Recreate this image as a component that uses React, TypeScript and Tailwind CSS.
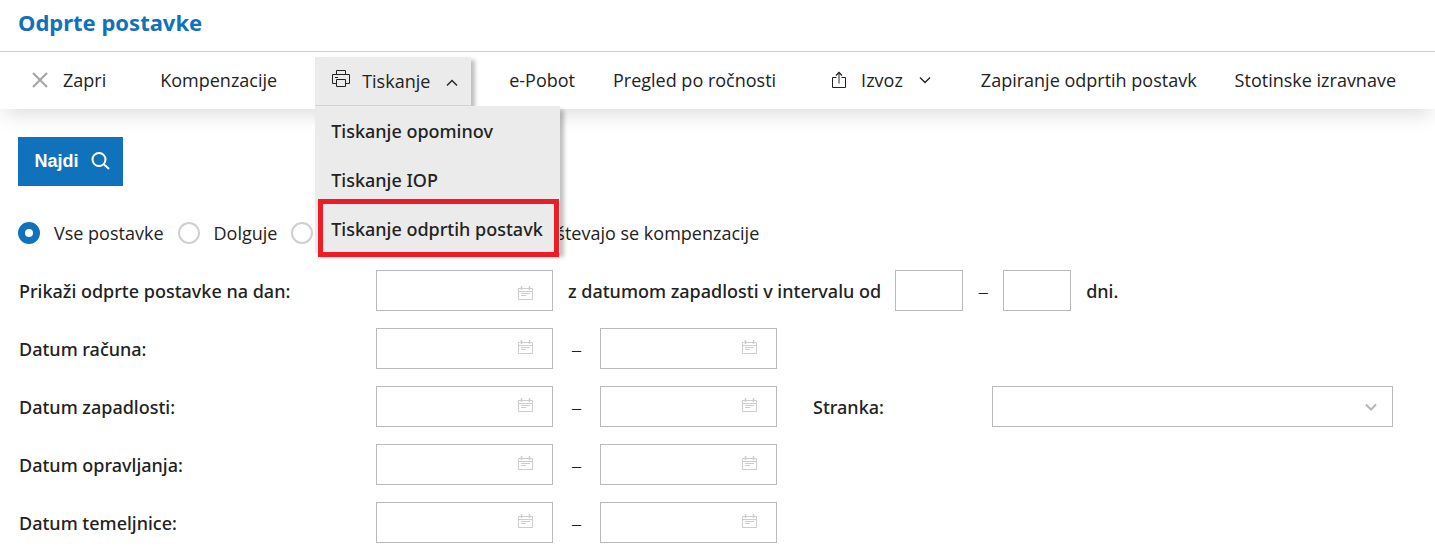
import { useState, type ReactNode } from "react";
import clsx from "clsx";

function CloseIcon() {
  return (
    <svg width="16" height="16" viewBox="0 0 16 16" fill="none" stroke="#a3a3a3" strokeWidth="2" aria-hidden="true">
      <path d="M1 1l14 14M15 1L1 15" />
    </svg>
  );
}

function PrinterIcon() {
  return (
    <svg width="20" height="18" viewBox="0 0 20 18" fill="none" stroke="#222" aria-hidden="true">
      <path d="M5.5 4.5v-4h9v4M5.5 13.5h-4v-9h17v9h-4M5.5 9.5h9v7h-9zM4 7.5h3" />
    </svg>
  );
}

function ExportIcon() {
  return (
    <svg width="14" height="18" viewBox="0 0 14 18" fill="none" stroke="#222" aria-hidden="true">
      <path d="M4.5 6.5h-4v10h13v-10h-4M7 12.5V1.5" />
      <path d="M4 4.5l3-3 3 3" strokeWidth="1.3" />
    </svg>
  );
}

function Chevron({ up = false, color = "#222", strokeWidth = 1.4 }: { up?: boolean; color?: string; strokeWidth?: number }) {
  return (
    <svg width="12" height="8" viewBox="0 0 12 8" fill="none" stroke={color} strokeWidth={strokeWidth} aria-hidden="true">
      <path d={up ? "M1 6.5l5-5 5 5" : "M1 1.5l5 5 5-5"} />
    </svg>
  );
}

function SearchIcon() {
  return (
    <svg width="19" height="18" viewBox="0 0 19 18" fill="none" stroke="#fff" strokeWidth="2" aria-hidden="true">
      <circle cx="8" cy="7.5" r="6.5" />
      <path d="M12.5 12l5.5 5" />
    </svg>
  );
}

function CalendarIcon() {
  return (
    <svg width="15" height="14" viewBox="0 0 15 14" fill="none" stroke="#cdcdcd" aria-hidden="true">
      <path d="M.5 2.5h14v11H.5zM.5 5.5h14M3 7.5h9M3 9.5h5" />
      <path d="M3.5 0v4M11.5 0v4" strokeWidth="1.5" />
    </svg>
  );
}

function DateInput({ id, label, low = false }: { id: string; label?: string; low?: boolean }) {
  return (
    <div className="relative w-[177px] shrink-0">
      <input
        id={id}
        type="text"
        aria-label={label}
        className="block h-[41px] w-full border border-[#b9babe] bg-white pr-10 pl-3 outline-none"
      />
      <span className={clsx("pointer-events-none absolute right-5", low ? "top-4" : "top-3")}>
        <CalendarIcon />
      </span>
    </div>
  );
}

function Dash({ className }: { className: string }) {
  return <span className={clsx("shrink-0 text-center text-[22px] leading-7 font-light", className)}>–</span>;
}

function Row({ id, label, children }: { id: string; label: string; children: ReactNode }) {
  return (
    <div className="flex items-center">
      <label htmlFor={id} className={clsx("w-[357px] shrink-0", labelClass)}>
        {label}
      </label>
      {children}
    </div>
  );
}

function DateRange({ id, label }: { id: string; label: string }) {
  return (
    <>
      <DateInput id={id} />
      <Dash className="w-[47px]" />
      <DateInput id={`${id}-do`} label={`${label} do`} />
    </>
  );
}

const labelClass = "font-['Noto_Sans',sans-serif] font-medium";

const radioClass =
  "size-[22px] shrink-0 appearance-none rounded-full border-2 border-[#cfcfcf] bg-white checked:border-[7px] checked:border-[#1072ba]";

const printItems = ["Tiskanje opominov", "Tiskanje IOP", "Tiskanje odprtih postavk"];

function PrintMenu() {
  const [open, setOpen] = useState(true);

  return (
    <div className="relative z-10 mb-px self-end">
      <button
        type="button"
        aria-expanded={open}
        onClick={() => setOpen(!open)}
        className="flex h-[49px] w-[156px] items-center border-b border-[#d4d4d4] bg-[#ebebeb] pl-4 shadow-[4px_3px_4px_rgba(0,0,0,0.25)]"
      >
        <span className="-mt-1">
          <PrinterIcon />
        </span>
        <span className="ml-[11px]">Tiskanje</span>
        <span className="mt-1 ml-4">
          <Chevron up={open} />
        </span>
      </button>
      {open && (
        <ul
          className={clsx(
            "absolute top-full left-0 w-[245px] bg-[#ebebeb] shadow-[4px_4px_4px_rgba(0,0,0,0.25)]",
            labelClass,
          )}
        >
          {printItems.map((item, i) => (
            <li key={item} className="relative">
              <button type="button" className="h-[49px] w-full pl-4 text-left whitespace-nowrap">
                {item}
              </button>
              {i === 2 && (
                <span className="pointer-events-none absolute -top-[5px] right-px -bottom-1 left-[3px] border-[5px] border-[#ee1c24]" />
              )}
            </li>
          ))}
        </ul>
      )}
    </div>
  );
}

export default function App() {
  return (
    <div className="bg-white font-['Open_Sans',sans-serif] text-lg text-[#222]">
      <header className="relative z-20 flex h-[52px] items-start border-b border-[#cfcfcf] bg-white px-[18px] pt-[7px]">
        <h1 className="font-['Noto_Sans',sans-serif] text-[22px] leading-[30px] font-bold text-[#1072ba]">Odprte postavke</h1>
      </header>

      <nav className="relative z-10 flex h-[57px] items-center gap-[38px] bg-white pb-0.5 pl-8 whitespace-nowrap shadow-[0_10px_20px_-4px_rgba(0,0,0,0.13)]">
        <button type="button" className="flex items-center gap-[15px] pr-4">
          <CloseIcon />
          Zapri
        </button>
        <button type="button">Kompenzacije</button>
        <PrintMenu />
        <button type="button">e-Pobot</button>
        <button type="button">Pregled po ročnosti</button>
        <button type="button" className="flex items-center pr-3 pl-[18px]">
          <ExportIcon />
          <span className="ml-[15px]">Izvoz</span>
          <span className="ml-4">
            <Chevron />
          </span>
        </button>
        <button type="button">Zapiranje odprtih postavk</button>
        <button type="button">Stotinske izravnave</button>
      </nav>

      <main className="px-[18px] pt-7 pb-1">
        <button
          type="button"
          className="flex h-[49px] w-[105px] items-center justify-center gap-3 bg-[#1072ba] pb-0.5 pl-[3px] font-['Liberation_Sans',sans-serif] font-bold text-white"
        >
          Najdi
          <SearchIcon />
        </button>

        <div className="mt-[33px] flex h-7 items-center whitespace-nowrap">
          <label className="mr-[14px] flex items-center gap-[14px]">
            <input type="radio" name="postavke" defaultChecked className={radioClass} />
            Vse postavke
          </label>
          <label className="mr-[14px] flex items-center gap-[14px]">
            <input type="radio" name="postavke" className={radioClass} />
            Dolguje
          </label>
          <input type="radio" name="postavke" aria-label="Terja" className={radioClass} />
          <label className="ml-[174px] flex items-center gap-[14px]">
            <input type="checkbox" className="size-5 appearance-none border border-[#b9babe]" />
            Upoštevajo se kompenzacije
          </label>
        </div>

        <form className="mt-[23px] ml-px flex flex-col gap-[17px]">
          <Row id="na-dan" label="Prikaži odprte postavke na dan:">
            <DateInput id="na-dan" low />
            <label htmlFor="dni-od" className={clsx("mr-[14px] ml-[15px] whitespace-nowrap", labelClass)}>
              z datumom zapadlosti v intervalu od
            </label>
            <input id="dni-od" type="text" className="h-[41px] w-[68px] border border-[#b9babe] outline-none" />
            <Dash className="w-10" />
            <input id="dni-do" type="text" className="h-[41px] w-[68px] border border-[#b9babe] outline-none" />
            <label htmlFor="dni-do" className={clsx("ml-[15px]", labelClass)}>
              dni.
            </label>
          </Row>
          <Row id="racun" label="Datum računa:">
            <DateRange id="racun" label="Datum računa" />
          </Row>
          <Row id="zapadlost" label="Datum zapadlosti:">
            <DateRange id="zapadlost" label="Datum zapadlosti" />
            <label htmlFor="stranka" className={clsx("ml-9 w-[179px] shrink-0", labelClass)}>
              Stranka:
            </label>
            <div className="relative mr-6 flex-1">
              <select id="stranka" className="block h-[41px] w-full appearance-none border border-[#b9babe] bg-white px-3 outline-none">
                <option value="" />
              </select>
              <span className="pointer-events-none absolute top-[17px] right-4">
                <Chevron color="#b4b4b4" strokeWidth={2} />
              </span>
            </div>
          </Row>
          <Row id="opravljanje" label="Datum opravljanja:">
            <DateRange id="opravljanje" label="Datum opravljanja" />
          </Row>
          <Row id="temeljnica" label="Datum temeljnice:">
            <DateRange id="temeljnica" label="Datum temeljnice" />
          </Row>
        </form>
      </main>
    </div>
  );
}
